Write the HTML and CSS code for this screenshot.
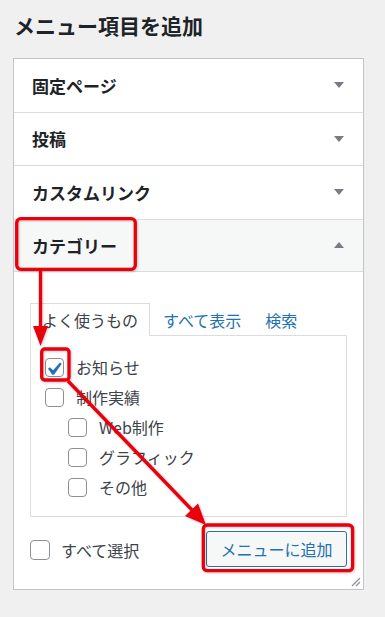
FILE: index.html
```html
<!DOCTYPE html>
<html lang="ja">
<head>
<meta charset="utf-8">
<title>メニュー項目を追加</title>
<link rel="stylesheet" href="styles.css">
</head>
<body>
<div class="page">
  <h2 class="title">メニュー項目を追加</h2>
  <div class="panel">
    <div class="section">
      <div class="section-title"><span>固定ページ</span><span class="tri down"></span></div>
    </div>
    <div class="section">
      <div class="section-title"><span>投稿</span><span class="tri down"></span></div>
    </div>
    <div class="section">
      <div class="section-title"><span>カスタムリンク</span><span class="tri down"></span></div>
    </div>
    <div class="section open">
      <div class="section-title"><span>カテゴリー</span><span class="tri up"></span></div>
      <div class="section-content">
        <div class="tabs">
          <span class="tab active">よく使うもの</span>
          <span class="tab">すべて表示</span>
          <span class="tab">検索</span>
        </div>
        <div class="tab-panel">
          <div class="item">
            <span class="cb checked"><svg viewBox="3.5 1.5 14.4 14.4" width="19" height="19"><path d="M14.83 4.89l1.34.94-5.81 8.38H9.02L5.78 9.67l1.34-1.25 2.57 2.4z" fill="#2271b1"/></svg></span>
            <span class="label">お知らせ</span>
          </div>
          <div class="item">
            <span class="cb"></span><span class="label">制作実績</span>
          </div>
          <div class="item child">
            <span class="cb"></span><span class="label">Web制作</span>
          </div>
          <div class="item child">
            <span class="cb"></span><span class="label">グラフィック</span>
          </div>
          <div class="item child">
            <span class="cb"></span><span class="label">その他</span>
          </div>
        </div>
        <div class="actions">
          <div class="select-all"><span class="cb"></span><span class="label">すべて選択</span></div>
          <button class="button">メニューに追加</button>
        </div>
      </div>
    </div>
    <svg class="resize" width="10" height="10" viewBox="0 0 10 10"><path d="M9 1L1 9M9 5L5 9" stroke="#8c8f94" stroke-width="1.2" fill="none"/></svg>
  </div>
</div>
<svg class="annot" width="385" height="617" viewBox="0 0 385 617">
  <defs>
    <filter id="sh" x="-10%" y="-10%" width="120%" height="120%">
      <feDropShadow dx="0.8" dy="0.8" stdDeviation="0.8" flood-color="#000" flood-opacity="0.25"/>
    </filter>
  </defs>
  <g filter="url(#sh)" fill="none" stroke="#e8000b" stroke-width="3.3">
    <rect x="16.7" y="218.7" width="118.6" height="50.6" rx="4"/>
    <rect x="41.7" y="349" width="27.3" height="31" rx="3"/>
    <rect x="203.3" y="525" width="149.3" height="45.7" rx="4"/>
    <line x1="40.5" y1="270" x2="40.5" y2="328"/>
    <line x1="68" y1="381" x2="192" y2="510"/>
  </g>
  <g filter="url(#sh)" fill="#e8000b">
    <polygon points="33,326 48,326 40.5,346"/>
    <polygon points="185,516 198,503.5 206,525"/>
  </g>
</svg>
</body>
</html>
```

FILE: styles.css
```css
* { box-sizing: border-box; }
html, body { margin: 0; padding: 0; }
body {
  background: #f0f0f1;
  font-family: "Noto Sans CJK JP", "Noto Sans", sans-serif;
  color: #1d2327;
  position: relative;
  width: 385px;
  height: 617px;
  overflow: hidden;
}
.page { padding-top: 10px; }
.title {
  margin: 0 0 0 14px;
  font-size: 21px;
  line-height: 30px;
  font-weight: 700;
  color: #1d2327;
}
.panel {
  position: relative;
  margin: 18px 0 0 13px;
  width: 351px;
  background: #fff;
  border: 1px solid #c3c4c7;
}
.section { border-bottom: 1px solid #dcdcde; }
.section.open { border-bottom: none; }
.section-title {
  height: 52.5px;
  display: flex;
  align-items: center;
  justify-content: space-between;
  padding: 0 19px 0 18px;
  font-size: 17px;
  font-weight: 700;
  color: #1d2327;
  background: #fff;
}
.section.open .section-title {
  background: #f6f7f7;
  border-bottom: 1px solid #dcdcde;
}
.tri {
  width: 0; height: 0;
  border-left: 5.5px solid transparent;
  border-right: 5.5px solid transparent;
}
.tri.down { border-top: 6px solid #787c82; }
.tri.up { border-bottom: 6px solid #787c82; }
.section-content { padding: 31px 16px 22px 16px; }
.tabs {
  display: flex;
  height: 32px;
  position: relative;
  z-index: 1;
}
.tab {
  display: flex;
  align-items: center;
  padding: 0 11px;
  height: 33px;
  border: 1px solid transparent;
  border-bottom: none;
  font-size: 16px;
  color: #2271b1;
}
.tab + .tab { margin-left: 1px; }
.tab.active {
  background: #fff;
  border-color: #dcdcde;
  color: #3c434a;
}
.tab:nth-child(3) { margin-left: 0; }
.tab-panel {
  border: 1px solid #dcdcde;
  padding: 16px 14px 14px 14px;
  background: #fff;
}
.item {
  display: flex;
  align-items: center;
  height: 30px;
}
.item.child { padding-left: 23px; }
.cb {
  width: 19px;
  height: 19px;
  flex: none;
  border: 1px solid #8c8f94;
  border-radius: 4px;
  background: #fff;
  display: flex;
  align-items: center;
  justify-content: center;
  overflow: visible;
}
.cb svg { display: block; flex: none; }
.label {
  margin-left: 12px;
  font-size: 16px;
  color: #3c434a;
}
.actions {
  display: flex;
  align-items: center;
  justify-content: space-between;
  margin-top: 14px;
}
.select-all {
  display: flex;
  align-items: center;
  padding-top: 2px;
}
.select-all .cb { width: 20px; height: 20px; }
.select-all .label { margin-left: 11px; }
.button {
  height: 36px;
  width: 141px;
  padding: 0;
  font-family: inherit;
  font-size: 16px;
  color: #2271b1;
  background: #f6f7f7;
  border: 1px solid #2271b1;
  border-radius: 3px;
}
.resize {
  position: absolute;
  right: 2px;
  bottom: 2px;
}
.annot {
  position: absolute;
  top: 0;
  left: 0;
  z-index: 10;
  pointer-events: none;
}
```
